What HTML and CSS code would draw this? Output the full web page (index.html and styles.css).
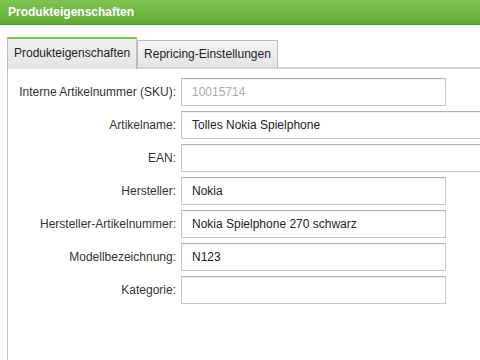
FILE: index.html
```html
<!DOCTYPE html>
<html lang="de">
<head>
    <meta charset="UTF-8">
    <meta name="viewport" content="width=device-width, initial-scale=1.0">
    <title>Produkteigenschaften</title>
    <link rel="stylesheet" href="styles.css">
</head>
<body>
    <div class="header">Produkteigenschaften</div>

    <div class="tabs">
        <div class="tab active">Produkteigenschaften</div>
        <div class="tab">Repricing-Einstellungen</div>
        <div class="tab-rest"></div>
    </div>

    <!-- Form Panel -->
    <div class="panel">
        <form class="form">
            <label for="sku">Interne Artikelnummer (SKU):</label>
            <input type="text" id="sku" class="readonly" value="10015714" readonly>

            <label for="name">Artikelname:</label>
            <input type="text" id="name" class="wide" value="Tolles Nokia Spielphone">

            <label for="ean">EAN:</label>
            <input type="text" id="ean" class="wide" value="">

            <label for="maker">Hersteller:</label>
            <input type="text" id="maker" value="Nokia">

            <label for="makerNo">Hersteller-Artikelnummer:</label>
            <input type="text" id="makerNo" value="Nokia Spielphone 270 schwarz">

            <label for="model">Modellbezeichnung:</label>
            <input type="text" id="model" value="N123">

            <label for="category">Kategorie:</label>
            <input type="text" id="category" value="">
        </form>
    </div>
</body>
</html>
```

FILE: styles.css
```css
html, body {
    height: 100%;
}
body {
    display: flex;
    flex-direction: column;
    font-family: "Liberation Sans", Arial, sans-serif;
    font-size: 12px;
    color: #333;
    background-color: #fff;
    margin: 0;
    padding: 0;
    overflow: hidden;
}
.header {
    height: 24px;
    line-height: 24px;
    padding-left: 8px;
    color: #fff;
    font-weight: bold;
    font-size: 12px;
    background: linear-gradient(#80c653, #5fac35);
    border-bottom: 1px solid #4f9a2a;
}
.tabs {
    display: flex;
    align-items: flex-end;
    margin-top: 12px;
    padding-left: 7px;
}
.tab {
    box-sizing: border-box;
    height: 29px;
    line-height: 26px;
    padding: 0 6px;
    border: 1px solid #bdbdbd;
    border-bottom: 2px solid #d4d4d4;
    background: linear-gradient(#f5f5f5, #e4e4e4);
    color: #222;
}
.tab.active {
    height: 32px;
    line-height: 28px;
    border-top: 2px solid #7bc553;
    border-bottom: none;
    background: linear-gradient(#eeeeee, #e6e6e6);
}
.tab-rest {
    flex: 1;
    border-bottom: 2px solid #d4d4d4;
}
.panel {
    flex: 1;
    margin-left: 7px;
    border-left: 1px solid #c4c4c4;
    padding-top: 9px;
}
.form {
    display: grid;
    grid-template-columns: 168px auto;
    column-gap: 5px;
    row-gap: 5px;
    align-items: center;
}
label {
    text-align: right;
    color: #333;
}
input {
    box-sizing: border-box;
    width: 265px;
    height: 28px;
    padding: 0 10px;
    font-family: "Liberation Sans", Arial, sans-serif;
    font-size: 12px;
    color: #222;
    border: 1px solid #c6c6c6;
    border-top-color: #b0b0b0;
    box-shadow: inset 0 1px 1px rgba(0, 0, 0, 0.06);
    background: #fff;
    outline: none;
}
input.wide {
    width: 320px;
}
input.readonly {
    color: #aaa;
}
```
